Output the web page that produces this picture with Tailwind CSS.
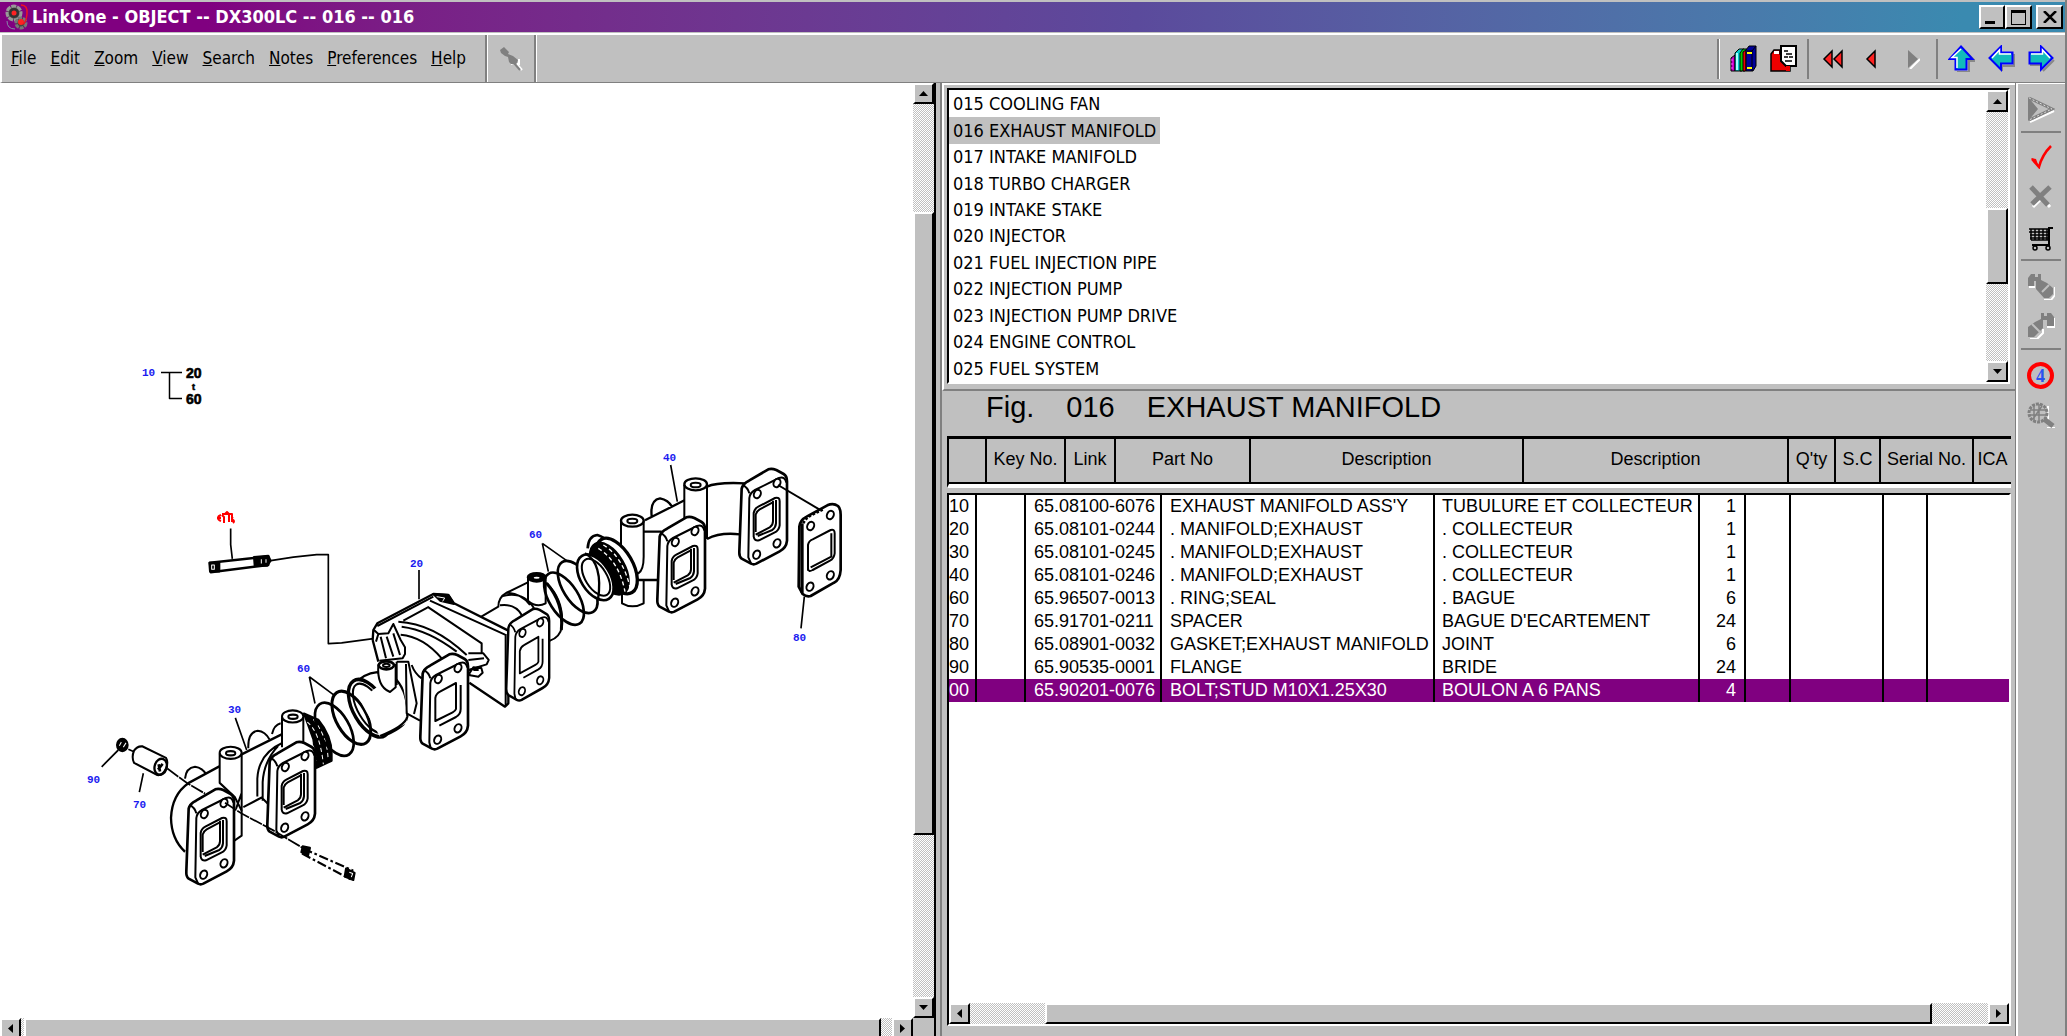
<!DOCTYPE html>
<html lang="en">
<head>
<meta charset="utf-8">
<title>LinkOne - OBJECT -- DX300LC -- 016 -- 016</title>
<script src="https://cdn.jsdelivr.net/npm/@tailwindcss/browser@4"></script>
</head>
<body class="h-screen overflow-hidden bg-[#c0c0c0] text-black font-['DejaVu_Sans_Condensed','DejaVu_Sans',sans-serif]">
<div class="flex h-full flex-col border-r-2 border-r-[#808080]">

  <!-- Title bar -->
  <header class="mt-[2px] flex h-[30px] shrink-0 items-center bg-linear-to-r from-[#800080] from-10% via-[#5b4a9c] via-55% to-[#3a8ab0] to-95% pl-1 pr-[2px]">
    <svg class="h-7 w-[26px] shrink-0" viewBox="0 0 26 28" aria-hidden="true">
      <circle cx="10" cy="10" r="7" fill="#555" stroke="#999" stroke-width="3" stroke-dasharray="5 1"/>
      <circle cx="10" cy="10" r="5" fill="#333"/><circle cx="10" cy="10" r="2.500" fill="#f22"/>
      <circle cx="17" cy="20" r="5" fill="#444" stroke="#777" stroke-width="3" stroke-dasharray="4 1"/>
      <circle cx="17" cy="19" r="3" fill="#f22"/>
      <path d="M17 2q7 0 6 9t-4 10" fill="none" stroke="#e12" stroke-width="1.500"/><path d="M3 18q0 8 8 8" fill="none" stroke="#88a"/>
    </svg>
    <h1 class="flex-1 whitespace-pre pl-[2px] text-[18px] font-bold leading-6 text-white">LinkOne - OBJECT -- DX300LC -- 016 -- 016</h1>
    <div class="flex">
      <button aria-label="Minimize" class="flex h-6 w-[26px] items-end justify-center border-2 border-b-black border-l-white border-r-black border-t-white bg-[#c0c0c0] pb-[3px]"><span class="mr-1 h-[3px] w-[10px] bg-black"></span></button>
      <button aria-label="Maximize" class="flex h-6 w-[27px] items-center justify-center border-2 border-b-black border-l-white border-r-black border-t-white bg-[#c0c0c0]"><span class="h-[15px] w-[15px] border border-t-[3px] border-black"></span></button>
      <button aria-label="Close" class="ml-1 flex h-6 w-[27px] items-center justify-center border-2 border-b-black border-l-white border-r-black border-t-white bg-[#c0c0c0]">
        <svg class="h-3 w-[14px]" viewBox="0 0 14 12"><path d="M1 0L13 12M13 0L1 12" stroke="#000" stroke-width="2.500"/></svg>
      </button>
    </div>
  </header>

  <!-- Menu and toolbar -->
  <div class="mt-px flex h-[50px] shrink-0 border-b border-l-2 border-t-2 border-b-[#808080] border-l-white border-t-white text-[17px] leading-6">
    <nav class="flex items-center gap-[14px] border-r-2 border-[#808080] pb-[2px] pl-[9px] pr-[19px]" aria-label="Menu">
      <a href="#"><u>F</u>ile</a><a href="#"><u>E</u>dit</a><a href="#"><u>Z</u>oom</a><a href="#"><u>V</u>iew</a><a href="#"><u>S</u>earch</a><a href="#"><u>N</u>otes</a><a href="#"><u>P</u>references</a><a href="#"><u>H</u>elp</a>
    </nav>
    <button aria-label="Pin" class="flex w-[49px] items-center justify-center border-l border-r-2 border-l-white border-r-[#808080]">
      <svg class="h-6 w-6" viewBox="0 0 24 24"><path d="M17 16l6 7M20 12v5h-8" stroke="#fff" stroke-width="2" fill="none"/><path d="M1 3l4-3 5 5-1 2 5 2 5 4-2 5-5-1-2-2-1-5-3-1-4-3z" fill="#808080"/><path d="M15 16l6 7" stroke="#808080" stroke-width="2"/></svg>
    </button>
    <div class="flex-1 border-l border-white"></div>
    <div class="flex h-10 items-center self-center border-l-2 border-[#808080] pr-px">
      <div class="flex h-10 w-[88px] items-center justify-center gap-[13px] border-l border-white pr-px">
        <button aria-label="Books"><svg class="h-[27px] w-[27px]" viewBox="0 0 27 27" stroke="#000">
          <path d="M1 13l4-3v16H1z" fill="#c0c"/><path d="M2 14v12" stroke="#f5f" stroke-dasharray="2 2"/>
          <path d="M5 8l4-4h5l-2 4v18H5z" fill="#0cc"/><path d="M7 8v17" stroke="#aff" stroke-width="2"/>
          <path d="M10 8l3-4h4l-2 3v19h-5z" fill="#0c0"/><path d="M13 7l3-2v21h-3z" fill="#e00"/>
          <path d="M16 5l3-4h7v20l-3 5h-7z" fill="#00009a"/><path d="M17 6h5v20M22 6l4-5" fill="none"/><path d="M17 8h5M17 23h5" stroke="#ff0" stroke-width="2"/>
        </svg></button>
        <button aria-label="Pages"><svg class="h-[27px] w-[27px]" viewBox="0 0 27 27">
          <path d="M1 9l3-4h6v4h10v17H1z" fill="#e00" stroke="#000" stroke-width="1.500"/><path d="M4 9V6h5v3" fill="#fff"/><path d="M11 1h15v20H16l-5-5z" fill="#fff" stroke="#000" stroke-width="2"/><path d="M14 6h4M16 9h6M14 12h4M19 12h4M15 16h7" stroke="#000" stroke-width="1.500"/><path d="M16 21v5h4v-5" fill="#e00"/>
        </svg></button>
      </div>
      <div class="flex h-10 w-[129px] items-center border-l-2 border-[#808080]">
        <button aria-label="First" class="ml-[13px]"><svg class="h-5 w-[22px]" viewBox="0 0 22 20"><path d="M10 2v16L2 10zM20 2v16L12 10z" fill="#f22" stroke="#000" stroke-width="1.500"/></svg></button>
        <button aria-label="Previous" class="ml-[21px]"><svg class="h-5 w-3" viewBox="0 0 12 20"><path d="M10 2v16L2 10z" fill="#f22" stroke="#000" stroke-width="1.500"/></svg></button>
        <button aria-label="Next" class="ml-[31px]"><svg class="h-5 w-3" viewBox="0 0 12 20"><path d="M2 20L12 10" stroke="#fff" stroke-width="2"/><path d="M0 1v18l10-9z" fill="#808080"/></svg></button>
      </div>
      <div class="flex h-10 items-center gap-[13px] border-l-2 border-[#808080] pl-[10px] pr-[9px]">
        <button aria-label="Up"><svg class="h-[27px] w-[27px]" viewBox="0 0 27 27"><path d="M14 3L27 16H21V27H9" stroke="#888" stroke-width="2" fill="none"/><path d="M13 1.500L24.500 14H18.500V24.500H7.500V14H1.500z" fill="#1bb" stroke="#00f" stroke-width="2"/><path d="M13 4L4 12.500h5V23" fill="none" stroke="#fff" stroke-width="1.500"/></svg></button>
        <button aria-label="Back"><svg class="h-[27px] w-[27px]" viewBox="0 0 27 27"><path d="M14 26v-5h12V9" stroke="#888" stroke-width="2" fill="none"/><path d="M1.500 13L13 1.500V7.500H24.500V18.500H13V24.500z" fill="#1bb" stroke="#00f" stroke-width="2"/><path d="M4 13L11.500 5v4H23" fill="none" stroke="#fff" stroke-width="1.500"/></svg></button>
        <button aria-label="Forward"><svg class="h-[27px] w-[27px]" viewBox="0 0 27 27"><path d="M26 15L15 26M2 20h10" stroke="#888" stroke-width="2" fill="none"/><path d="M24.500 13L13 1.500V7.500H1.500V18.500H13V24.500z" fill="#1bb" stroke="#00f" stroke-width="2"/><path d="M3 9h11.500V5L22 13" fill="none" stroke="#fff" stroke-width="1.500"/></svg></button>
      </div>
    </div>
  </div>

  <main class="grid min-h-0 flex-1 grid-cols-[936fr_1080fr_49px]">

    <!-- Drawing pane -->
    <section class="grid min-h-0 min-w-0 grid-cols-[1fr_21px] grid-rows-[1fr_18px] border-r-2 border-black bg-white" aria-label="Drawing">
      <div class="min-h-0 overflow-hidden">
        <svg class="h-full w-full" viewBox="0 83 913 935" preserveAspectRatio="xMinYMin meet" fill="none" stroke="#000" stroke-width="2" stroke-linejoin="round">
          <defs>
            <g id="holes">
              <ellipse cx="55" cy="78" rx="10" ry="13" transform="rotate(25 55 78)"/><ellipse cx="114" cy="45" rx="10" ry="13" transform="rotate(25 114 45)"/>
              <ellipse cx="53" cy="260" rx="10" ry="13" transform="rotate(25 53 260)"/><ellipse cx="114" cy="226" rx="10" ry="13" transform="rotate(25 114 226)"/>
            </g>
            <g id="flange" fill="#fff" stroke-width="8">
              <path d="M8 62Q12 46 30 38L88 4Q98 0 112 6L134 18Q144 24 144 40V218Q142 240 122 250L52 287Q44 291 36 287L8 272Q0 266 1 250Z"/>
              <path d="M10 50Q26 58 31 76M36 286L28 268 31 90Q33 74 48 66L120 30Q138 24 142 44" fill="none" stroke-width="6"/>
              <use href="#holes" stroke-width="6"/>
              <path d="M44 135Q46 122 58 116L108 90Q122 86 122 100V172Q120 188 106 194L60 217Q46 220 44 206Z" stroke-width="6"/>
              <path d="M50 200L92 178Q102 172 102 160V98M50 192V140Q52 130 62 124L100 104M56 204L100 186Q110 178 111 166V96" fill="none" stroke-width="6"/>
            </g>
            <g id="flangeThin" fill="#fff" stroke-width="8">
              <path d="M8 62Q12 46 30 38L88 4Q98 0 112 6L134 18Q144 24 144 40V218Q142 240 122 250L52 287Q44 291 36 287L8 272Q0 266 1 250Z"/>
              <path d="M10 50Q26 58 31 76M32 286L28 268 31 90Q33 74 48 66L120 30Q138 24 142 44" fill="none" stroke-width="6"/>
              <use href="#holes" stroke-width="6"/>
              <path d="M46 204V135Q48 122 60 116L108 90V168Q106 174 98 178ZM58 218L108 192Q122 184 122 168V96" stroke-width="6"/>
            </g>
          </defs>

          <!-- Assembly bracket -->
          <path d="M161 372.500H182M169.500 372.500V398.500H182" stroke-width="1.500"/>

          <!-- Part 30: lower manifold; lower 60 rings -->
          <g transform="translate(60 350) scale(.33333 .35714)" stroke-width="6">
            <path d="M512 500V545L517 585M632 590L700 580 770 573H805V822L845 820 940 808M526 1030L560 1120M748 915L765 990M748 915L820 965M205 1118L222 1125M125 1167L175 1120M250 1185L238 1238" stroke-width="5"/>
            <path d="M450 596L625 578V602L452 622Z" fill="#fff" stroke-width="7"/><path d="M448 596H478V620H450ZM582 580L625 576 632 590 622 604 584 604Z" fill="#000"/><path d="M455 602h8v12h-8zM604 586v12M618 586v10" stroke="#fff" stroke-width="3"/>
            <ellipse cx="187" cy="1106" rx="16" ry="17" fill="#000"/><path d="M178 1108l6-10M190 1112l8-12" stroke="#fff" stroke-width="3"/>
            <path d="M222 1122Q232 1108 248 1110L318 1142Q326 1155 318 1172 308 1192 292 1190L222 1156Q214 1140 222 1122Z" fill="#fff"/>
            <ellipse cx="302" cy="1167" rx="18" ry="23" transform="rotate(20 302 1167)" stroke-width="7"/><path d="M294 1175l14-16M296 1160l4 20" stroke-width="8"/>

            <path d="M375 1200Q378 1170 405 1167 428 1170 440 1190M565 1115Q563 1070 593 1066 616 1068 628 1090M636 1075Q642 1050 662 1045"/>
            <path d="M375 1405Q334 1370 333 1310 336 1245 385 1213L665 1076 720 1100 700 1240 605 1253 520 1295Z" fill="#fff" stroke="none"/>
            <path d="M375 1405Q334 1370 333 1310 336 1245 385 1213L478 1166M545 1132L665 1076" stroke-width="7"/>
            <path d="M668 1100Q596 1130 592 1200V1250M655 1108Q612 1150 608 1210V1262M550 1280L605 1253 625 1272M518 1240L545 1290V1360L520 1376"/>
            <path d="M479 1130V1212Q490 1240 530 1250L545 1200V1130Z" fill="#fff" stroke="none"/><path d="M479 1130V1212L522 1250M545 1130V1290M528 1285L545 1240"/>
            <ellipse cx="512" cy="1128" rx="33" ry="17" fill="#fff"/><ellipse cx="512" cy="1129" rx="14" ry="6"/>
            <path d="M732 1018L775 1035Q815 1080 815 1130V1150L770 1170 760 1090Z" fill="#000"/>
            <path d="M742 1042Q780 1070 790 1160M738 1072Q764 1100 768 1150M760 1034Q800 1080 804 1140" stroke="#fff" stroke-width="3" stroke-dasharray="12 9"/>
            <path d="M666 1028V1115L730 1100V1028Z" fill="#fff" stroke="none"/><path d="M666 1028V1112M730 1028V1100"/><ellipse cx="698" cy="1026" rx="32" ry="17" fill="#fff"/><ellipse cx="699" cy="1027" rx="14" ry="6"/>
            <ellipse cx="823" cy="1062" rx="45" ry="83" transform="rotate(-32 823 1062)" stroke-width="8"/>
            <path d="M878 940Q910 905 952 902L1020 955Q1045 1000 1040 1035 1030 1060 965 1083" fill="#fff"/>
            <ellipse cx="928" cy="1003" rx="48" ry="90" transform="rotate(-32 928 1003)" fill="#fff" stroke-width="10"/><ellipse cx="930" cy="1003" rx="36" ry="78" transform="rotate(-32 930 1003)"/>
            <ellipse cx="874" cy="1030" rx="45" ry="83" transform="rotate(-32 874 1030)" stroke-width="9"/>
            <path d="M730 1396L880 1458M726 1410L872 1482" stroke-dasharray="28 8 8 8"/><path d="M728 1390L750 1394 744 1416 724 1406ZM858 1452L884 1464 880 1484 854 1474Z" fill="#000"/><path d="M868 1462l10 4-4 10" stroke="#fff" stroke-width="3"/>
          </g>
          <g transform="translate(267 741) scale(.33333)"><use href="#flange"/></g>
          <g transform="translate(186 788) scale(.33333)"><use href="#flange"/></g>
          <g transform="translate(60 350) scale(.33333 .35714)" stroke-width="5"><path d="M322 1172L380 1212 435 1242M495 1268L545 1298 640 1345 735 1398" stroke-dasharray="40 3"/></g>

          <!-- Part 20: centre; upper 60 rings; part 40; gasket 80 -->
          <g transform="translate(340 440) scale(.33333)" stroke-width="6">
            <path d="M415 535L475 500Q475 472 500 458L562 428 620 430Q672 480 666 560 660 592 630 602L500 620Z" fill="#fff"/>
            <path d="M480 496Q525 490 545 525M488 468Q550 452 582 505M500 458Q545 460 570 495"/>
            <path d="M564 415V482Q590 505 617 490V415Z" fill="#fff"/><ellipse cx="590" cy="412" rx="27" ry="13" fill="#000"/><ellipse cx="590" cy="413" rx="12" ry="6" fill="#fff"/>
            <path d="M620 430Q672 490 664 570" stroke-width="9"/>
            <path d="M165 700L205 740Q206 830 200 850L120 890 60 780Z" fill="#fff" stroke="none"/>
            <path d="M168 718Q205 760 202 830 195 858 120 888" stroke-width="7"/>
            <path d="M98 600L100 570 112 550 280 462 325 465 342 490 505 572V790L495 800 388 728 245 850 203 822 180 680 115 665Z" fill="#fff" stroke="none"/>
            <path d="M98 600L100 570 112 550 280 462 325 465 342 490 505 572V790L495 800 388 728M98 600L115 665" stroke-width="7"/>
            <path d="M112 558L280 470M270 482L495 584M497 582V798M190 542L262 503M262 500L425 610V640M175 545Q280 550 380 645M185 560Q265 570 350 635M182 584Q250 590 305 655"/>
            <path d="M280 462L325 465 342 492 300 482Z" fill="#000"/><path d="M290 470l24 4-6 10" stroke="#fff" stroke-width="3"/>
            <path d="M102 570L115 582 145 580 160 552 182 600 195 622V642L188 655 118 662M122 590L138 655M140 590L160 650M160 580L180 645M115 582L108 605"/>
            <path d="M385 640H430L446 660 440 673 385 690M385 660L432 655M388 700L400 682 424 684 428 698 415 710 390 706ZM400 690h16"/>
            <path d="M115 675Q110 740 150 756L167 742V675Z" fill="#fff"/><ellipse cx="139" cy="676" rx="23" ry="12" fill="#fff" stroke-width="8"/><ellipse cx="139" cy="676" rx="10" ry="5"/>
            <path d="M170 665H205L230 790 222 822M198 672L200 820 240 842M215 675Q225 702 245 715M170 665V735"/>
            <ellipse cx="672" cy="476" rx="44" ry="88" transform="rotate(-32 672 476)" stroke-width="8"/>
            <ellipse cx="713" cy="441" rx="44" ry="88" transform="rotate(-32 713 441)" stroke-width="8"/>
            <path d="M743 325Q745 288 772 285 792 290 800 305" stroke-width="8"/>
            <path d="M846 420V490Q877 508 911 490V420Z" fill="#fff"/>
            <path d="M840 300L1035 180 1197 130V282L1101 297 955 420H890Z" fill="#fff" stroke="none"/>
            <path d="M915 241L1035 180M935 228Q930 180 960 175 985 180 996 200M911 275H965M890 420H955" stroke-width="7"/>
            <path d="M1101 140Q1130 126 1215 130M1101 297Q1140 276 1200 283" stroke-width="7"/>
            <path d="M1033 135V240L1101 290V135Z" fill="#fff" stroke="none"/><path d="M1033 135V240M1101 135V297"/>
            <ellipse cx="1067" cy="133" rx="34" ry="18" fill="#fff" stroke-width="7"/><ellipse cx="1067" cy="135" rx="15" ry="7"/>
            <path d="M843 243V380L895 400Q911 390 911 350V243Z" fill="#fff"/><ellipse cx="877" cy="242" rx="34" ry="18" fill="#fff" stroke-width="7"/><ellipse cx="877" cy="243" rx="15" ry="7"/>
            <ellipse cx="830" cy="378" rx="48" ry="92" transform="rotate(-30 830 378)" fill="#fff" stroke-width="10"/>
            <ellipse cx="808" cy="386" rx="46" ry="86" transform="rotate(-30 808 386)" fill="#000"/>
            <path d="M790 315Q850 350 872 450M775 325Q838 365 855 455" stroke="#fff" stroke-width="4" stroke-dasharray="12 9"/>
            <ellipse cx="766" cy="412" rx="44" ry="76" transform="rotate(-32 766 412)" fill="#fff" stroke-width="8"/><ellipse cx="768" cy="412" rx="32" ry="62" transform="rotate(-32 768 412)"/>
            <path d="M735 340Q790 370 774 480" stroke-width="7"/>
            <g stroke-width="5"><path d="M237 390V478M607 310L625 395M607 310L680 362M992 75L1012 185M1393 470L1383 565"/></g>
          </g>
          <g transform="translate(420 653) scale(.33333)"><use href="#flangeThin"/></g>
          <g transform="translate(506 608) scale(.3 .32)"><use href="#flangeThin"/></g>
          <g transform="translate(657 516) scale(.33333)"><use href="#flange"/></g>
          <g transform="translate(739 468) scale(.33333)"><use href="#flange"/></g>
          <path d="M778 485L822 511"/>
          <g transform="translate(340 440) scale(.33333)" stroke-width="8">
            <path d="M1378 260Q1380 240 1400 230L1462 196Q1480 188 1494 198 1502 206 1502 224V390Q1500 420 1482 428L1412 468Q1400 472 1388 462L1376 440Z" fill="#fff"/>
            <path d="M1386 458V250" stroke-width="10"/><path d="M1390 250Q1396 236 1412 226L1450 208" stroke-width="8" stroke-dasharray="8 5"/>
            <path d="M1404 392V315Q1406 302 1418 298L1472 270Q1484 266 1484 280V340Q1482 356 1470 362L1418 390Q1404 398 1404 384M1474 280V350L1412 382" stroke-width="6"/>
            <g transform="translate(1357 180)" stroke-width="6"><use href="#holes"/></g>
          </g>

          <!-- Callout numbers -->
          <g stroke="none" fill="#1a1af0" font-family="Liberation Mono, monospace" font-size="11" font-weight="bold">
            <text x="142" y="376">10</text><text x="410" y="567">20</text><text x="297" y="672">60</text><text x="228" y="713">30</text><text x="87" y="783">90</text><text x="133" y="808">70</text>
            <text x="529" y="538">60</text><text x="663" y="461">40</text><text x="793" y="641">80</text>
          </g>
          <g stroke="#000" stroke-width=".6" fill="#000" font-family="Liberation Sans, Arial, sans-serif" font-size="14" font-weight="bold">
            <text x="186" y="378">20</text><text x="192" y="390" font-size="9">t</text><text x="186" y="404">60</text>
          </g>
          <path d="M221 515q-3 1-3 3t3 3M217 518h4M222 515l2 2v6M225 514l2-2 2 2v8M229 514l3 0v8M233 517q-2 2 0 3t0 3M222 514h9" stroke="#f00"/>
        </svg>
      </div>
      <div class="flex flex-col bg-[repeating-conic-gradient(#c0c0c0_0_25%,#ffffff_0_50%)] [background-size:2px_2px]">
        <button aria-label="Scroll up" class="flex h-[21px] items-center justify-center border-2 border-b-black border-l-white border-r-black border-t-white bg-[#c0c0c0]"><svg class="h-[5px] w-[9px]" viewBox="0 0 9 5"><path d="M0 5h9L4.500 0z"/></svg></button>
        <div class="basis-[108px]"></div>
        <div class="grow-[622] border-2 border-b-black border-l-white border-r-black border-t-white bg-[#c0c0c0]"></div>
        <div class="grow-[163]"></div>
        <button aria-label="Scroll down" class="flex h-[21px] items-center justify-center border-2 border-b-black border-l-white border-r-black border-t-white bg-[#c0c0c0]"><svg class="h-[5px] w-[9px]" viewBox="0 0 9 5"><path d="M0 0h9L4.500 5z"/></svg></button>
      </div>
      <div class="flex bg-[repeating-conic-gradient(#c0c0c0_0_25%,#ffffff_0_50%)] [background-size:2px_2px]">
        <button aria-label="Scroll left" class="flex w-[21px] items-center justify-center border-2 border-b-0 border-l-white border-r-black border-t-white bg-[#c0c0c0]"><svg class="h-[9px] w-[5px]" viewBox="0 0 5 9"><path d="M5 0v9L0 4.500z"/></svg></button>
        <div class="w-[3px]"></div>
        <div class="flex-1 border-2 border-b-0 border-l-white border-r-black border-t-white bg-[#c0c0c0]"></div>
        <div class="w-[11px]"></div>
        <button aria-label="Scroll right" class="flex w-[21px] items-center justify-center border-2 border-b-0 border-l-white border-r-black border-t-white bg-[#c0c0c0]"><svg class="h-[9px] w-[5px]" viewBox="0 0 5 9"><path d="M0 0v9L5 4.500z"/></svg></button>
      </div>
      <div class="bg-[#c0c0c0]"></div>
    </section>

    <!-- Right-hand pane -->
    <section class="ml-1 flex min-h-0 min-w-0 flex-col border-l-2 border-r border-[#808080]" aria-label="Parts list">
      <div class="shrink-0 border-b-2 border-l-2 border-t-2 border-b-[#808080] border-l-white border-t-white pb-[5px] pl-[3px] pr-[5px] pt-[3px]">
        <div class="flex h-[296px] border-2 border-b-white border-l-black border-r-white border-t-black bg-white">
          <ul class="flex flex-1 flex-col items-start pt-px text-[18px] leading-6">
            <li class="flex flex-1 items-center px-1"><a href="#">015 COOLING FAN</a></li>
            <li class="flex flex-1 items-center bg-[#c0c0c0] px-1"><a href="#" aria-current="true">016 EXHAUST MANIFOLD</a></li>
            <li class="flex flex-1 items-center px-1"><a href="#">017 INTAKE MANIFOLD</a></li>
            <li class="flex flex-1 items-center px-1"><a href="#">018 TURBO CHARGER</a></li>
            <li class="flex flex-1 items-center px-1"><a href="#">019 INTAKE STAKE</a></li>
            <li class="flex flex-1 items-center px-1"><a href="#">020 INJECTOR</a></li>
            <li class="flex flex-1 items-center px-1"><a href="#">021 FUEL INJECTION PIPE</a></li>
            <li class="flex flex-1 items-center px-1"><a href="#">022 INJECTION PUMP</a></li>
            <li class="flex flex-1 items-center px-1"><a href="#">023 INJECTION PUMP DRIVE</a></li>
            <li class="flex flex-1 items-center px-1"><a href="#">024 ENGINE CONTROL</a></li>
            <li class="flex flex-1 items-center px-1"><a href="#">025 FUEL SYSTEM</a></li>
          </ul>
          <div class="flex w-[22px] flex-col bg-[repeating-conic-gradient(#c0c0c0_0_25%,#ffffff_0_50%)] [background-size:2px_2px]">
            <button aria-label="Scroll up" class="flex h-[22px] items-center justify-center border-2 border-b-black border-l-white border-r-black border-t-white bg-[#c0c0c0]"><svg class="h-[5px] w-[9px]" viewBox="0 0 9 5"><path d="M0 5h9L4.500 0z"/></svg></button>
            <div class="h-24"></div>
            <div class="h-[76px] border-2 border-b-black border-l-white border-r-black border-t-white bg-[#c0c0c0]"></div>
            <div class="flex-1"></div>
            <button aria-label="Scroll down" class="flex h-[21px] items-center justify-center border-2 border-b-black border-l-white border-r-black border-t-white bg-[#c0c0c0]"><svg class="h-[5px] w-[9px]" viewBox="0 0 9 5"><path d="M0 0h9L4.500 5z"/></svg></button>
          </div>
        </div>
      </div>

      <h2 class="flex h-[45px] shrink-0 gap-8 pl-11 font-['Liberation_Sans',Arial,sans-serif] text-[29px] leading-8"><span>Fig.</span><span>016</span><span>EXHAUST MANIFOLD</span></h2>

      <div class="flex min-h-0 flex-1 flex-col pb-[10px] pl-[5px] pr-1 font-['Liberation_Sans',Arial,sans-serif] text-[18px]">
        <div class="shrink-0 overflow-hidden border-b-4 border-l-2 border-t-[3px] border-b-white border-l-black border-t-black">
          <table class="h-[45px] w-full table-fixed border-collapse border-b-2 border-black leading-5">
            <thead><tr>
              <th class="w-[37px] border-r-2 border-black p-0"></th>
              <th class="w-[79px] border-r-2 border-black p-0 pb-1 font-normal">Key No.</th>
              <th class="w-[50px] border-r-2 border-black p-0 pb-1 font-normal">Link</th>
              <th class="w-[135px] border-r-2 border-black p-0 pb-1 font-normal">Part No</th>
              <th class="w-[273px] border-r-2 border-black p-0 pb-1 font-normal">Description</th>
              <th class="w-[265px] border-r-2 border-black p-0 pb-1 font-normal">Description</th>
              <th class="w-[47px] border-r-2 border-black p-0 pb-1 font-normal">Q'ty</th>
              <th class="w-[45px] border-r-2 border-black p-0 pb-1 font-normal">S.C</th>
              <th class="w-[93px] border-r-2 border-black p-0 pb-1 font-normal">Serial No.</th>
              <th class="p-0 pb-1 font-normal">ICA</th>
            </tr></thead>
          </table>
        </div>
        <div class="mt-[5px] flex min-h-0 flex-1 flex-col border-2 border-b-white border-l-black border-r-white border-t-black bg-white">
          <div class="min-h-0 flex-1 overflow-hidden">
            <table class="w-full table-fixed border-collapse whitespace-pre leading-[23px]">
              <colgroup><col class="w-[27px]"><col class="w-[49px]"><col class="w-[136px]"><col class="w-[273px]"><col class="w-[265px]"><col class="w-[46px]"><col class="w-[45px]"><col class="w-[93px]"><col class="w-[44px]"><col></colgroup>
              <tbody id="parts"></tbody>
            </table>
          </div>
          <div class="flex h-[21px] shrink-0 bg-[repeating-conic-gradient(#c0c0c0_0_25%,#ffffff_0_50%)] [background-size:2px_2px]">
            <button aria-label="Scroll left" class="flex w-[21px] items-center justify-center border-2 border-b-black border-l-white border-r-black border-t-white bg-[#c0c0c0]"><svg class="h-[9px] w-[5px]" viewBox="0 0 5 9"><path d="M5 0v9L0 4.500z"/></svg></button>
            <div class="w-[75px]"></div>
            <div class="flex-1 border-2 border-b-black border-l-white border-r-black border-t-white bg-[#c0c0c0]"></div>
            <div class="w-14"></div>
            <button aria-label="Scroll right" class="flex w-[21px] items-center justify-center border-2 border-b-black border-l-white border-r-black border-t-white bg-[#c0c0c0]"><svg class="h-[9px] w-[5px]" viewBox="0 0 5 9"><path d="M0 0v9L5 4.500z"/></svg></button>
          </div>
        </div>
      </div>
    </section>

    <!-- Side toolbar -->
    <aside class="flex flex-col items-center border-l-2 border-t border-white pr-[2px]" aria-label="Tools">
      <button aria-label="Run" class="mt-3"><svg class="h-[27px] w-7" viewBox="0 0 28 27"><path d="M3 26L27 15" stroke="#fff" stroke-width="2"/><path d="M1 1v24l10-12z" fill="#808080"/><path d="M2 2L25 13 2 24" fill="none" stroke="#808080" stroke-width="3"/><path d="M2 2L25 13 2 24" fill="none" stroke="#ddd" stroke-dasharray="2 2"/><path d="M1 1v24l9-12z" fill="#808080"/></svg></button>
      <hr class="mt-[8px] w-10 border-t-2 border-[#808080]">
      <button aria-label="Apply" class="mt-3"><svg class="h-6 w-6" viewBox="0 0 24 24"><path d="M3 14l7 8Q13 10 22 1" fill="none" stroke="#f00" stroke-width="2.500"/><path d="M2 13l5 1 3 8" fill="#f00"/></svg></button>
      <button aria-label="Delete" class="mt-4"><svg class="h-6 w-6" viewBox="0 0 24 24"><path d="M4 22l9-9 8 9" stroke="#fff" stroke-width="3" fill="none"/><path d="M2 2l17 18M21 2L3 19" stroke="#808080" stroke-width="5"/></svg></button>
      <button aria-label="Cart" class="mt-[18px]"><svg class="h-6 w-[26px]" viewBox="0 0 26 24" fill="none" stroke="#000"><path d="M1 2h20M1 5h20M2 8h19M2 11h19M3 13h18" stroke-width="1.500"/><path d="M3 2v11M7 2v11M11 2v11M15 2v11M19 2v11" stroke-width="1.500"/><path d="M25 1h-4v18M4 18h17" stroke-width="2" /><circle cx="7" cy="21" r="2" stroke-width="1.500"/><circle cx="20" cy="21" r="2" stroke-width="1.500"/></svg></button>
      <hr class="mt-[8px] w-10 border-t-2 border-[#808080]">
      <button aria-label="Find next" class="mt-3"><svg class="h-[27px] w-7" viewBox="0 0 28 27"><path d="M17 27h7l4-5v-8M2 14h6" stroke="#fff" stroke-width="2" fill="none"/><path d="M1 5l3-4h4v3h3V1h3v6l6 3 6 5v6l-4 4h-5l-8-9V8H7v5H1z" fill="#808080"/><path d="M15 19l7-7" stroke="#c0c0c0" stroke-width="2"/></svg></button>
      <button aria-label="Find previous" class="mt-3"><svg class="h-[27px] w-7" viewBox="0 0 28 27"><path d="M3 27h7l6-6v-4M20 15h7V6" stroke="#fff" stroke-width="2" fill="none"/><path d="M27 5l-3-4h-4v3h-3V1h-3v6L8 10l-7 5v10h6l9-9V8h4v6h7z" fill="#808080"/><path d="M5 12l8 8" stroke="#c0c0c0" stroke-width="2"/></svg></button>
      <hr class="mt-[9px] w-10 border-t-2 border-[#808080]">
      <button aria-label="Quantity" class="mt-3 flex h-[27px] w-[27px] items-center justify-center rounded-full border-4 border-[#f00] font-['Liberation_Serif',serif] text-[18px] font-bold leading-5 text-[#2a50f0]">4</button>
      <button aria-label="Search the web" class="mt-3"><svg class="h-[27px] w-7" viewBox="0 0 28 27"><path d="M20 27h8M21 5v14" stroke="#fff" stroke-width="2"/><circle cx="11" cy="12" r="9" fill="none" stroke="#808080" stroke-width="3" stroke-dasharray="3 1"/><path d="M3 9h16M3 14h16M7 3v17M12 3v17M15 5L6 18" stroke="#808080" stroke-width="1.500"/><path d="M17 18l9 7" stroke="#808080" stroke-width="5"/></svg></button>
    </aside>
  </main>
</div>

<script>
const rows = [
  ["10", "65.08100-6076", "EXHAUST MANIFOLD ASS'Y", "TUBULURE ET COLLECTEUR", "1"],
  ["20", "65.08101-0244", ". MANIFOLD;EXHAUST", ". COLLECTEUR", "1"],
  ["30", "65.08101-0245", ". MANIFOLD;EXHAUST", ". COLLECTEUR", "1"],
  ["40", "65.08101-0246", ". MANIFOLD;EXHAUST", ". COLLECTEUR", "1"],
  ["60", "65.96507-0013", ". RING;SEAL", ". BAGUE", "6"],
  ["70", "65.91701-0211", "SPACER", "BAGUE D'ECARTEMENT", "24"],
  ["80", "65.08901-0032", "GASKET;EXHAUST MANIFOLD", "JOINT", "6"],
  ["90", "65.90535-0001", "FLANGE", "BRIDE", "24"],
  ["00", "65.90201-0076", "BOLT;STUD M10X1.25X30", "BOULON A 6 PANS", "4"]
];
const cell = (text, cls) => `<td class="border-r-2 border-black p-0 ${cls}">${text}</td>`;
document.getElementById("parts").innerHTML = rows.map((r, i) =>
  `<tr class="${i === rows.length - 1 ? "bg-[#800080] text-white" : ""}">` +
  cell(r[0], "text-left") + cell("", "") + cell(r[1], "pl-2") + cell(r[2], "pl-2") + cell(r[3], "pl-[7px]") +
  cell(r[4], "pr-2 text-right") + cell("", "") + cell("", "") + cell("", "") + `<td></td></tr>`).join("");
</script>
</body>
</html>
